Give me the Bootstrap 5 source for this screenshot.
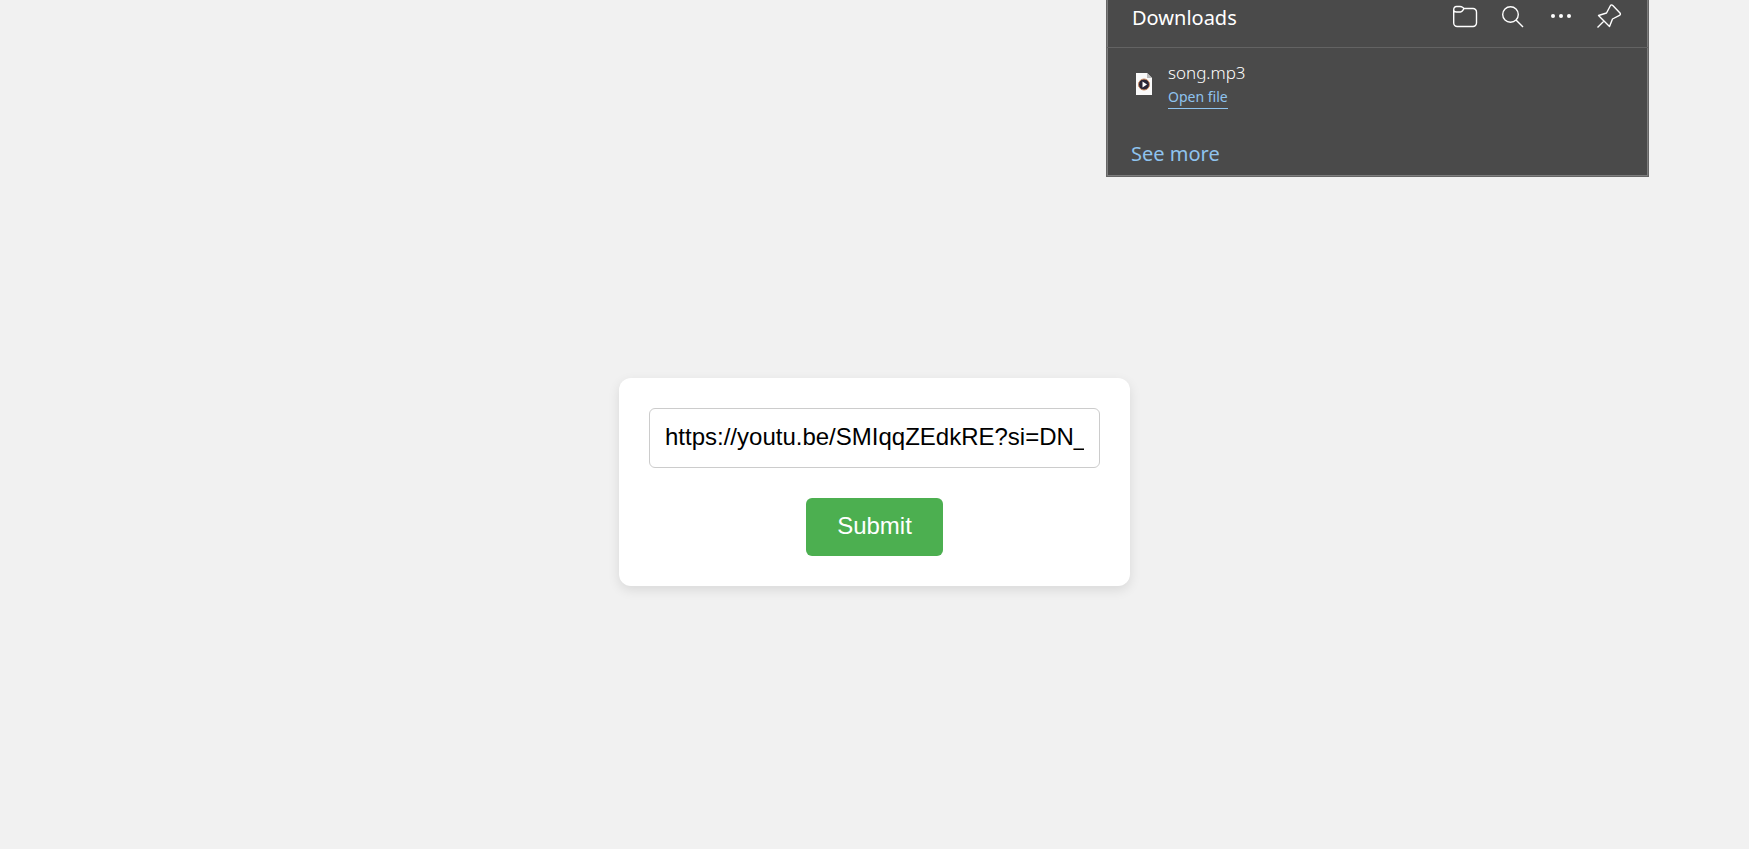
<!DOCTYPE html>
<html lang="en">
<head>
<meta charset="utf-8">
<meta name="viewport" content="width=device-width, initial-scale=1">
<title>Downloads</title>
<link rel="stylesheet" href="https://cdn.jsdelivr.net/npm/bootstrap@5.3.0/dist/css/bootstrap.min.css">
<style>
body { background: #f1f1f1; font-family: "Liberation Sans", Arial, sans-serif; }
.page { padding-top: 115px; }
.link-form { width: 511px; max-width: 100%; padding: 30px; gap: 30px; border-radius: 12px; box-shadow: 0 4px 12px rgba(0,0,0,.1); }
.link-form .form-control { height: 60px; padding: 14px 15px 16px; border: 1px solid #ccc; border-radius: 6px; font-size: 24px; line-height: 28px; color: #000; }
.link-form .btn { width: 137px; height: 58px; padding: 14px 0 16px; border: 0; border-radius: 6px; background: #4caf50; color: #fff; font-size: 24px; line-height: 28px; }
/* browser downloads flyout, over the page */
.flyout { top: 0; right: 100px; width: 543px; height: 177px; background: #4a4a4a; border: 1px solid #666; border-top: 0; box-shadow: inset 1px 0 #7d7d7d, inset -1px -1px #7d7d7d; color: #fff; font-family: "Noto Sans", "Open Sans", sans-serif; }
.flyout header { height: 48px; padding: 4px 26px 0 25px; border-bottom: 1px solid #636363; }
.flyout h1 { font-size: 20px; line-height: 28px; font-weight: 400; }
.flyout a { color: #8fc3ee; text-decoration: none; }
.tool { width: 26px; height: 26px; }
.tools { gap: 22px; }
.file-row { padding: 12px 28px 0; gap: 16px; }
.file-icon { margin-top: 13px; }
.file-name { font-size: 17px; line-height: 26px; font-weight: 300; }
.flyout .open-link { font-size: 14px; line-height: 22px; border-bottom: 1px solid #8fc3ee; }
.more-link { font-size: 20px; line-height: 28px; padding: 0 24px; margin-top: 31px; }
</style>
</head>
<body>
<main class="page min-vh-100 d-flex align-items-center justify-content-center">
  <form class="link-form bg-white d-flex flex-column align-items-center">
    <input type="text" class="form-control" aria-label="Video link" value="https://youtu.be/SMIqqZEdkRE?si=DN_">
    <button type="submit" class="btn">Submit</button>
  </form>
</main>
<aside class="flyout position-absolute d-flex flex-column" aria-label="Downloads">
  <header class="d-flex align-items-start justify-content-between">
    <h1 class="m-0">Downloads</h1>
    <div class="tools d-flex">
      <button type="button" class="tool btn p-0 border-0 d-flex" aria-label="Open folder">
        <svg width="26" height="26" viewBox="0 0 26 26" fill="none" stroke="#fff" stroke-width="1.4" stroke-linejoin="round"><path d="M1.700 6V19a3.500 3.500 0 0 0 3.500 3.500H21a3.500 3.500 0 0 0 3.500-3.500V8A3.500 3.500 0 0 0 21 4.500H12L10.500 3.200Q9.500 2.500 8 2.500H4.500Q1.700 2.500 1.700 6Q1.900 8 4.500 8H8.500Q10 8 11 6.200L12 4.500"/></svg>
      </button>
      <button type="button" class="tool btn p-0 border-0 d-flex" aria-label="Search">
        <svg width="26" height="26" viewBox="0 0 26 26" fill="none" stroke="#fff" stroke-width="1.400"><circle cx="10.500" cy="10.500" r="7.800"/><path d="M16 16l7 7"/></svg>
      </button>
      <button type="button" class="tool btn p-0 border-0 d-flex" aria-label="More options">
        <svg width="26" height="26" viewBox="0 0 26 26" fill="#fff"><circle cx="5" cy="12" r="2"/><circle cx="13" cy="12" r="2"/><circle cx="21" cy="12" r="2"/></svg>
      </button>
      <button type="button" class="tool btn p-0 border-0 d-flex" aria-label="Pin">
        <svg width="26" height="26" viewBox="0 0 26 26" fill="none" stroke="#fff" stroke-width="1.400" stroke-linejoin="round"><path d="M14.500 1.500Q15.500.300 16.800 1.500L24 9Q25 10.500 23.500 11.300L16.500 15L13.500 22.500L2.500 11.500L10.500 9ZM8 17L1.500 23.500"/></svg>
      </button>
    </div>
  </header>
  <div class="file-row d-flex">
    <svg class="file-icon flex-shrink-0" width="17" height="22" viewBox="0 0 17 22"><path d="M1 0h11l5 5v17H1z" fill="#fafafa"/><path d="M12 0l5 5h-5z" fill="#bbb"/><circle cx="9" cy="11.500" r="5.500" fill="#292536" stroke="#c98a62"/><path d="M7.500 8.500v6l4.500-3z" fill="#fff"/></svg>
    <div class="d-flex flex-column align-items-start">
      <span class="file-name">song.mp3</span>
      <a class="open-link" href="#">Open file</a>
    </div>
  </div>
  <a class="more-link align-self-start" href="#">See more</a>
</aside>
<script src="https://cdn.jsdelivr.net/npm/bootstrap@5.3.0/dist/js/bootstrap.bundle.min.js"></script>
</body>
</html>
